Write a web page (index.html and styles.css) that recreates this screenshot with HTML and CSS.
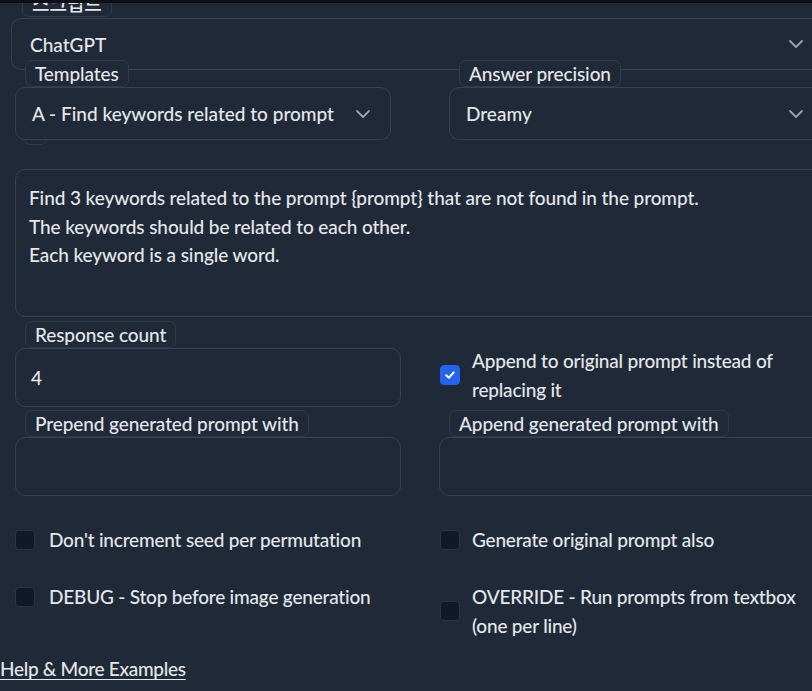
FILE: index.html
```html
<!DOCTYPE html>
<html lang="en">
<head>
<meta charset="utf-8">
<title>ChatGPT prompt script</title>
<link rel="stylesheet" href="styles.css">
</head>
<body>
<div class="topbar"></div>
<main class="panel">
  <section class="field field-script">
    <span class="tag tag-script">스크립트</span>
    <div class="select select-script">
      <span>ChatGPT</span>
      <svg class="chev" viewBox="0 0 16 10" width="16" height="10"><path d="M2 2l6 6 6-6"/></svg>
    </div>
  </section>

  <section class="row row-a">
    <div class="field">
      <span class="tag">Templates</span>
      <div class="select">
        <span>A - Find keywords related to prompt</span>
        <svg class="chev" viewBox="0 0 16 10" width="16" height="10"><path d="M2 2l6 6 6-6"/></svg>
      </div>
      <span class="stub"></span>
    </div>
    <div class="field">
      <span class="tag">Answer precision</span>
      <div class="select">
        <span>Dreamy</span>
        <svg class="chev" viewBox="0 0 16 10" width="16" height="10"><path d="M2 2l6 6 6-6"/></svg>
      </div>
    </div>
  </section>

  <div class="textarea">
    <p>Find 3 keywords related to the prompt {prompt} that are not found in the prompt.</p>
    <p>The keywords should be related to each other.</p>
    <p>Each keyword is a single word.</p>
  </div>

  <section class="row row-b">
    <div class="field">
      <span class="tag">Response count</span>
      <div class="input input-num">4</div>
    </div>
    <label class="check check-top">
      <span class="box checked">
        <svg viewBox="0 0 12 12" width="12" height="12"><path d="M2.2 6.3l2.6 2.5 5-5.4"/></svg>
      </span>
      <span class="check-text">Append to original prompt instead of replacing it</span>
    </label>
  </section>

  <section class="row row-b row-c">
    <div class="field">
      <span class="tag">Prepend generated prompt with</span>
      <div class="input"></div>
    </div>
    <div class="field">
      <span class="tag">Append generated prompt with</span>
      <div class="input"></div>
    </div>
  </section>

  <section class="checks">
    <label class="check"><span class="box"></span><span class="check-text">Don't increment seed per permutation</span></label>
    <label class="check check-right"><span class="box"></span><span class="check-text">Generate original prompt also</span></label>
    <label class="check check-start"><span class="box"></span><span class="check-text">DEBUG - Stop before image generation</span></label>
    <label class="check check-right"><span class="box"></span><span class="check-text">OVERRIDE - Run prompts from textbox (one per line)</span></label>
  </section>

  <a class="help" href="#">Help &amp; More Examples</a>
</main>
</body>
</html>
```

FILE: styles.css
```css
html, body {
  margin: 0;
  padding: 0;
  overflow: hidden;
  background: #1f2937;
}

body {
  width: 812px;
  height: 691px;
  color: #e5e7eb;
  font-family: "Lato", "Noto Sans CJK KR", sans-serif;
  font-weight: 500;
  font-size: 19px;
  line-height: 29px;
}

.topbar {
  position: relative;
  z-index: 2;
  height: 3px;
  background: #0d1016;
}

.panel {
  width: 809px;
  padding-left: 15px;
}

.field {
  display: flex;
  flex-direction: column;
  align-items: flex-start;
  min-width: 0;
}

.tag {
  position: relative;
  z-index: 1;
  display: inline-block;
  height: 25px;
  line-height: 25px;
  margin-left: 10px;
  padding: 0 9px;
  border: 1px solid #2f3a4a;
  border-radius: 7px;
  background: #1f2937;
  font-size: 19px;
  letter-spacing: -0.1px;
  color: #e5e7eb;
  white-space: nowrap;
}

.tag-script {
  margin-top: -13px;
  margin-left: 7px;
}

.select {
  box-sizing: border-box;
  display: flex;
  align-items: center;
  justify-content: space-between;
  align-self: stretch;
  height: 53px;
  padding: 0 19px 0 16px;
  border: 1px solid #374151;
  border-radius: 10px;
  background: #1f2937;
}

.select-script {
  height: 52px;
  margin-left: -4px;
  margin-top: 1px;
  padding-left: 18px;
}

.chev {
  flex: none;
  fill: none;
  stroke: #9ca3af;
  stroke-width: 1.8;
  stroke-linecap: round;
  stroke-linejoin: round;
}

.row {
  display: grid;
  grid-template-columns: 376px 1fr;
  column-gap: 58px;
}

.row-a {
  margin-top: -10px;
}

.stub {
  width: 19px;
  height: 4px;
  margin-left: 10px;
  border: 1px solid #2f3a4a;
  border-top: none;
  border-radius: 0 0 5px 5px;
}

.textarea {
  box-sizing: border-box;
  height: 148px;
  margin-top: 24px;
  padding: 14px 13px;
  border: 1px solid #374151;
  border-radius: 10px;
  line-height: 28.5px;
  letter-spacing: -0.1px;
}

.textarea p {
  margin: 0;
}

.row-b {
  grid-template-columns: 386px 1fr;
  column-gap: 38px;
  margin-top: 4px;
}

.row-c {
  margin-top: 3px;
}

.input {
  box-sizing: border-box;
  align-self: stretch;
  height: 59px;
  padding: 0 15px;
  border: 1px solid #374151;
  border-radius: 10px;
  line-height: 57px;
}

.check {
  display: flex;
  align-items: center;
  gap: 12px;
}

.check-top {
  margin-top: 25px;
  padding-left: 1px;
  align-self: start;
}

.check-top .check-text {
  width: 320px;
}

.check-text {
  letter-spacing: -0.2px;
}

.box {
  box-sizing: border-box;
  flex: none;
  display: flex;
  align-items: center;
  justify-content: center;
  width: 20px;
  height: 20px;
  border: 1px solid #2b3444;
  border-radius: 4px;
  background: #111827;
}

.box.checked {
  background: #2563eb;
  border-color: #2563eb;
}

.box svg {
  fill: none;
  stroke: #ffffff;
  stroke-width: 2;
  stroke-linecap: round;
  stroke-linejoin: round;
}

.checks {
  display: grid;
  grid-template-columns: 386px 1fr;
  column-gap: 39px;
  row-gap: 28px;
  margin-top: 29px;
}

.checks .check:not(.check-right) {
  gap: 14px;
}

.check-start {
  align-self: start;
}

.checks .check-right:last-child .check-text {
  width: 330px;
}

.help {
  display: inline-block;
  margin-top: 14px;
  margin-left: -15px;
  color: #e5e7eb;
  letter-spacing: -0.3px;
  text-decoration: underline;
  text-underline-offset: 3px;
}
```
